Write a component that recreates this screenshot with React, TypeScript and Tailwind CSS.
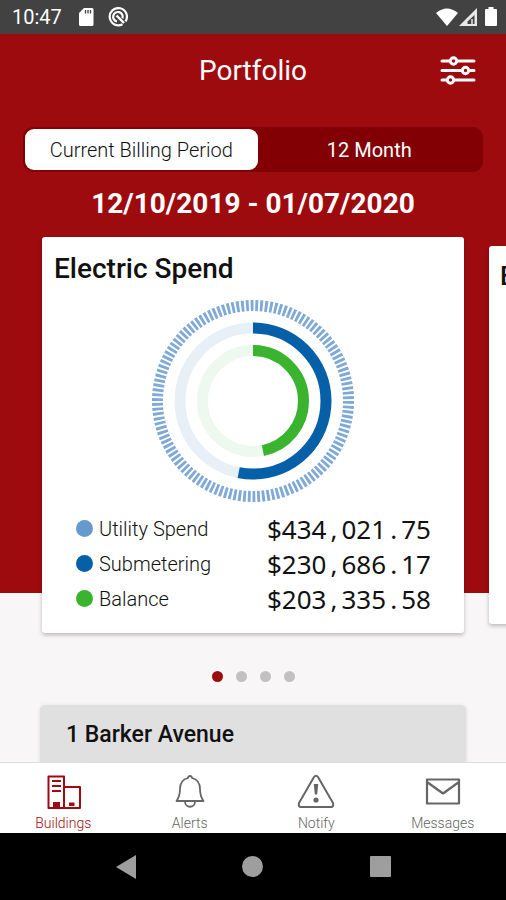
import React from "react";

const SERIES = [
  { label: "Utility Spend", amount: "$434,021.75", dot: "bg-[#6699cc]" },
  { label: "Submetering", amount: "$230,686.17", dot: "bg-[#0560a8]" },
  { label: "Balance", amount: "$203,335.58", dot: "bg-[#3ab32f]" },
];

function StatusBar() {
  return (
    <div className="flex h-[34px] shrink-0 items-center bg-[#424242] pr-2 pl-3 text-white">
      <span className="text-xl leading-6">10:47</span>
      <svg className="ml-4 h-5 w-4" viewBox="0 0 16 20" fill="currentColor" aria-hidden="true">
        <path d="M6 1h8a1.500 1.500 0 0 1 1.500 1.500v15a1.500 1.500 0 0 1-1.500 1.500H2.500A1.500 1.500 0 0 1 1 17.500V6z" />
        <path d="M7.500 3v3.500M10 3v3.500M12.500 3v3.500" stroke="#424242" strokeWidth="1.300" />
      </svg>
      <svg className="ml-3.5 h-5 w-5" viewBox="0 0 20 20" fill="none" stroke="currentColor" aria-hidden="true">
        <path d="M14.500 17.200a8.600 8.600 0 1 1 3-2.800" strokeWidth="2.200" />
        <path d="M9 14.500a4.800 4.800 0 1 1 5.500-3.200" strokeWidth="2.200" />
        <path d="M8.500 8.500l7.500 7.500" strokeWidth="2.400" />
      </svg>
      <span className="flex-1" />
      <svg className="h-5 w-[22px]" viewBox="0 0 22 20" fill="currentColor" aria-hidden="true">
        <path d="M0 6Q11-3 22 6L11 19z" />
      </svg>
      <svg className="h-5 w-5" viewBox="0 0 20 20" aria-hidden="true">
        <path d="M19 1v18H1z" fill="#e8e8e8" />
        <path d="M16.500 8v9H9.500V14.500z" fill="#424242" />
        <path d="M14 12v5" stroke="#e8e8e8" strokeWidth="1.500" />
      </svg>
      <svg className="ml-1.5 h-5 w-3.5" viewBox="0 0 14 20" fill="currentColor" aria-hidden="true">
        <path d="M4.500 0h5v2H12a1 1 0 0 1 1 1v15a1 1 0 0 1-1 1H2a1 1 0 0 1-1-1V3a1 1 0 0 1 1-1h2.500z" />
      </svg>
    </div>
  );
}

function SpendChart() {
  return (
    <svg className="mx-auto block size-[204px]" viewBox="-102 -102 204 204" fill="none" strokeWidth="11" role="img" aria-label="Electric spend breakdown">
      <circle r="95.500" stroke="#7fa9d6" pathLength="252" strokeDasharray="1.200 0.800" />
      <g transform="rotate(-90)">
        <circle r="73" stroke="#e8f0f7" />
        <circle r="73" stroke="#0560a8" pathLength="100" strokeDasharray="53.150 46.850" />
        <circle r="50.500" stroke="#edf8ee" />
        <circle r="50.500" stroke="#3ab32f" pathLength="100" strokeDasharray="46.850 53.150" />
      </g>
    </svg>
  );
}

/* Digits are tabular already; the separators get a cell of the same width. */
function Amount({ value }: { value: string }) {
  return (
    <>
      {value.split(/([,.])/).map((part, i) =>
        part === "," || part === "." ? (
          <span key={i} className="inline-block w-[15px] text-center">{part}</span>
        ) : (
          part
        ),
      )}
    </>
  );
}

function TabItem({ label, active, children }: { label: string; active?: boolean; children: React.ReactNode }) {
  return (
    <button
      type="button"
      className={`flex flex-1 flex-col items-center pt-2.5 text-sm leading-4 font-light ${active ? "text-[#9f0a12]" : "text-[#666666]"}`}
    >
      <svg className="mb-1.5 h-9 w-10" viewBox="0 0 40 36" fill="none" stroke="currentColor" strokeWidth="1.800" strokeLinejoin="round" aria-hidden="true">
        {children}
      </svg>
      {label}
    </button>
  );
}

export default function App() {
  return (
    <div className="flex h-screen flex-col overflow-hidden bg-[#f8f6f7] font-['Roboto',sans-serif] text-[#111111]">
      <StatusBar />
      <main className="relative isolate min-h-0 flex-1 overflow-hidden">
        <div className="absolute inset-x-0 top-0 -z-10 h-[559px] bg-[#9e0b0f]" />

        <header className="grid h-[74px] grid-cols-[1fr_auto_1fr] items-center px-[30px] text-white">
          <h1 className="col-start-2 text-[28px] leading-8">Portfolio</h1>
          <button type="button" aria-label="Filters" className="justify-self-end">
            <svg className="h-8 w-9" viewBox="0 0 36 32" fill="none" stroke="currentColor" strokeWidth="3" strokeLinecap="round">
              <path d="M2 6h32M2 15.500h32M2 25h32" />
              <g fill="#9e0b0f" strokeWidth="3">
                <circle cx="13.500" cy="6" r="3.200" />
                <circle cx="25.500" cy="15.500" r="3.200" />
                <circle cx="10.500" cy="25" r="3.200" />
              </g>
            </svg>
          </button>
        </header>

        <div className="mx-[23px] mt-[19px] flex h-[45px] rounded-[10px] bg-[#820004] p-0.5 text-xl">
          <button type="button" aria-pressed="true" className="w-[51%] rounded-[9px] bg-white font-light text-[#111111]">
            Current Billing Period
          </button>
          <button type="button" aria-pressed="false" className="flex-1 text-white">
            12 Month
          </button>
        </div>

        <p className="mt-4 text-center text-[28px] leading-8 font-bold text-white">12/10/2019 - 01/07/2020</p>

        <div className="mt-[17px] flex items-center gap-[25px] pl-[42px]">
          <section className="h-[396px] w-[calc(100%-42px)] shrink-0 rounded-[3px] bg-white px-3 pt-4 shadow-[0_2px_4px_rgba(0,0,0,0.25)]">
            <h2 className="text-[28px] leading-8 font-medium">Electric Spend</h2>
            <div className="mt-[14px]">
              <SpendChart />
            </div>
            <table className="mt-2 ml-[22px]">
              <tbody>
                {SERIES.map((s) => (
                  <tr key={s.label} className="h-[35px]">
                    <th scope="row" className="w-[191px] p-0 text-left text-xl font-light">
                      <span className="flex items-center gap-1.5">
                        <span className={`size-[17px] rounded-full ${s.dot}`} />
                        {s.label}
                      </span>
                    </th>
                    <td className="p-0 font-['Noto_Sans',sans-serif] text-[26px] leading-8 whitespace-nowrap">
                      <Amount value={s.amount} />
                    </td>
                  </tr>
                ))}
              </tbody>
            </table>
          </section>
          <section className="h-[378px] w-[calc(100%-84px)] shrink-0 rounded-[3px] bg-white px-[11px] pt-[14px] shadow-[0_2px_4px_rgba(0,0,0,0.25)]">
            <h2 className="text-[26px] leading-8 font-medium">E</h2>
          </section>
        </div>

        <div className="mt-[38px] flex justify-center gap-[13px]">
          <span className="size-[11px] rounded-full bg-[#9e0b0f]" />
          <span className="size-[11px] rounded-full bg-[#c2c0c1]" />
          <span className="size-[11px] rounded-full bg-[#c2c0c1]" />
          <span className="size-[11px] rounded-full bg-[#c2c0c1]" />
        </div>

        <section className="mx-10 mt-[23px] h-24 rounded-t-[5px] bg-[#e0e0e0] px-[26px] pt-[14px] shadow-[0_1px_4px_rgba(0,0,0,0.12)]">
          <h3 className="text-[23px] leading-8 font-medium">1 Barker Avenue</h3>
        </section>
      </main>

      <nav className="flex h-[71px] shrink-0 border-t border-[#dddddd] bg-white">
        <TabItem label="Buildings" active>
          <path d="M5.500 3.500H21V35H5.500zM21 14h16v21H21M9 8h9M9 13h9M9 18h9" strokeWidth="2" />
          <path d="M10 29h7v6h-7zM26 29.500h5.500V33H26z" fill="currentColor" stroke="none" />
        </TabItem>
        <TabItem label="Alerts">
          <path d="M20 3c-1.500 0-2 1.500-2 2-6 1.500-8 6-8 11 0 7-1.500 9-3.500 12h27c-2-3-3.500-5-3.500-12 0-5-2-9.500-8-11 0-.5-.5-2-2-2zM15 28.500c0 7 10 7 10 0" />
        </TabItem>
        <TabItem label="Notify">
          <path d="M18 4q2-2.500 4 0l15 26q1 4-2 4H5q-3 0-2-4z" strokeWidth="2" />
          <path d="M17.800 11h4.400l-1 10.500h-2.400z" fill="currentColor" stroke="none" />
          <circle cx="20" cy="27" r="2.600" fill="currentColor" stroke="none" />
        </TabItem>
        <TabItem label="Messages">
          <path d="M4 6.500h32v24H4zM4 9l16 11.500L36 9" strokeWidth="2.200" />
        </TabItem>
      </nav>

      <div className="flex h-[67px] shrink-0 items-center bg-black px-[62px] text-[#9e9e9e]">
        <button type="button" aria-label="Back" className="flex flex-1 justify-center">
          <svg className="h-6 w-[22px]" viewBox="0 0 22 24" fill="currentColor"><path d="M1 12L21 0v24z" /></svg>
        </button>
        <button type="button" aria-label="Home" className="flex flex-1 justify-center">
          <span className="size-[21px] rounded-full bg-current" />
        </button>
        <button type="button" aria-label="Recent apps" className="flex flex-1 justify-center">
          <span className="size-[21px] rounded-[1px] bg-current" />
        </button>
      </div>
    </div>
  );
}
